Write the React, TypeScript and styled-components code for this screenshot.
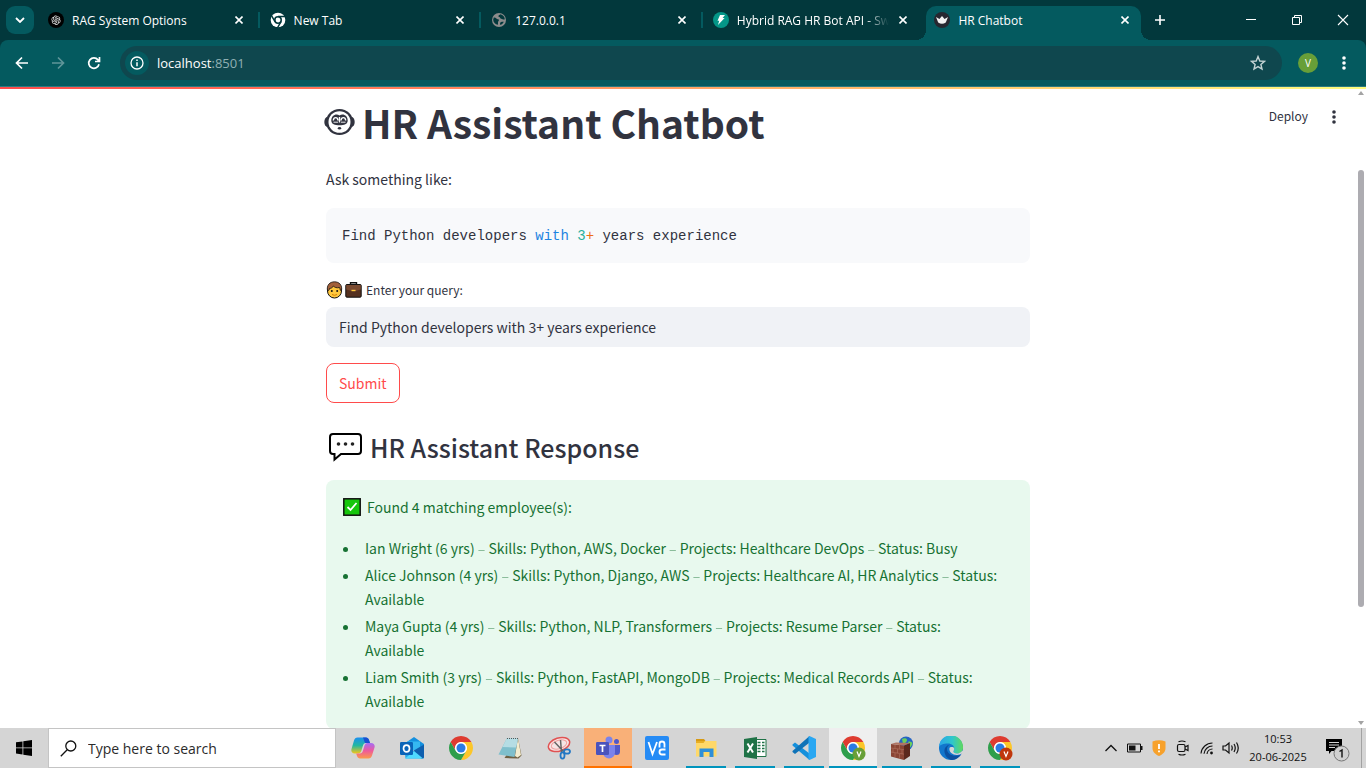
import React from "react";
import styled, { createGlobalStyle, css } from "styled-components";
import { AiOutlineOpenAI } from "react-icons/ai";

const chromeFont = `"Open Sans", "Noto Sans", sans-serif`;
const pageFont = `"Noto Sans CJK SC", "Noto Sans", sans-serif`;

const GlobalStyle = createGlobalStyle`
  *, *::before, *::after { box-sizing: border-box; }
  html, body { margin: 0; }
  body { font-family: ${pageFont}; color: #31333f; background: #fff; }
  button, input { font: inherit; color: inherit; margin: 0; }
  button { border: 0; padding: 0; background: none; cursor: pointer; }
  svg { display: block; flex: none; }
`;

/* ---------- shell ---------- */

const Desktop = styled.div`
  display: flex;
  flex-direction: column;
  height: 100vh;
  overflow: hidden;
`;

/* ---------- browser frame ---------- */

const BrowserFrame = styled.header`
  flex: none;
  font-family: ${chromeFont};
  color: #fff;
  background: #02383c;
`;

const TabStrip = styled.div`
  display: flex;
  align-items: flex-end;
  height: 40px;
  padding-left: 6px;
`;

const TabSearch = styled.button`
  display: grid;
  place-items: center;
  width: 28px;
  height: 28px;
  margin: 0 6px 6px 0;
  border-radius: 9px;
  background: #045a5f;
`;

const TabList = styled.nav`
  display: flex;
  flex: 0 1 1101px;
  min-width: 0;
`;

const Tab = styled.div<{ $active?: boolean }>`
  position: relative;
  display: flex;
  flex: 1 1 0;
  min-width: 0;
  align-items: center;
  gap: 8px;
  height: 34px;
  padding: 0 10px 6px 8px;
  border-radius: 10px 10px 0 0;
  ${(p) =>
    p.$active &&
    css`
      background: #045a5f;
      &::before,
      &::after {
        content: "";
        position: absolute;
        bottom: 0;
        width: 10px;
        height: 10px;
      }
      &::before {
        right: 100%;
        background: radial-gradient(circle at 0 0, transparent 10px, #045a5f 10px);
      }
      &::after {
        left: 100%;
        background: radial-gradient(circle at 100% 0, transparent 10px, #045a5f 10px);
      }
    `}
`;

const TabTitle = styled.a<{ $fade?: boolean }>`
  flex: 1;
  min-width: 0;
  padding-top: 2px;
  overflow: hidden;
  white-space: nowrap;
  font-size: 12px;
  line-height: 16px;
  color: #fff;
  text-decoration: none;
  ${(p) => p.$fade && "mask-image: linear-gradient(90deg, #000 84%, transparent);"}
`;

const TabDivider = styled.span<{ $hidden?: boolean }>`
  width: 2px;
  height: 16px;
  margin: 6px 2px 0 3px;
  background: ${(p) => (p.$hidden ? "transparent" : "#045a5f")};
`;

const IconButton = styled.button<{ $size?: number }>`
  display: grid;
  place-items: center;
  flex: none;
  width: ${(p) => p.$size ?? 28}px;
  height: ${(p) => p.$size ?? 28}px;
`;

const NewTab = styled(IconButton)`
  margin: 0 0 6px 5px;
`;

const WindowControls = styled.div`
  display: flex;
  align-self: stretch;
  margin-left: auto;
`;

const WindowButton = styled.button`
  display: grid;
  place-items: center;
  width: 46px;
`;

const Toolbar = styled.div`
  display: flex;
  align-items: center;
  gap: 8px;
  height: 47px;
  padding: 0 8px 1px;
  border-bottom: 1px solid #2b7a80;
  border-radius: 8px 8px 0 0;
  background: #045a5f;
`;

const Omnibox = styled.form`
  display: flex;
  flex: 1;
  align-items: center;
  height: 34px;
  margin: 0 4px;
  padding: 0 10px 0 5px;
  border-radius: 17px;
  background: #0f474e;
`;

const SiteInfo = styled.button`
  display: grid;
  place-items: center;
  width: 24px;
  height: 24px;
  border-radius: 50%;
  background: #045a5f;
`;

const Address = styled.span`
  flex: 1;
  padding-left: 8px;
  font-size: 13px;
  line-height: 20px;
  span { color: #8fb0b3; }
`;

const Avatar = styled.button`
  width: 20px;
  height: 20px;
  margin: 0 4px;
  border-radius: 50%;
  background: #689f38;
  font-size: 10px;
  line-height: 20px;
  text-align: center;
`;

/* ---------- page ---------- */

const Viewport = styled.div`
  display: flex;
  flex: 1;
  min-height: 0;
  position: relative;
  background: #fff;
`;

const Decoration = styled.div`
  flex: none;
  height: 2px;
  background: linear-gradient(90deg, #ff4b4b, #fffd80);
`;

const Main = styled.main`
  flex: 1;
  min-width: 0;
  overflow: hidden;
`;

const AppActions = styled.div`
  position: absolute;
  top: 14px;
  right: 18px;
  display: flex;
  align-items: center;
  gap: 12px;
`;

const Deploy = styled.button`
  padding-bottom: 2px;
  font-size: 12px;
  line-height: 20px;
`;

const Scrollbar = styled.div`
  display: flex;
  flex-direction: column;
  align-items: center;
  justify-content: space-between;
  flex: none;
  width: 10px;
  padding: 2px 0 3px;
`;

const ScrollTrack = styled.div`
  flex: 1;
  width: 6px;
  padding: 75px 0 114px;
`;

const ScrollThumb = styled.div`
  height: 100%;
  border-radius: 3px;
  background: #adacb1;
`;

const Block = styled.div`
  width: 100%;
  max-width: 704px;
  margin: 0 auto;
  padding-top: 6px;
`;

const Title = styled.h1`
  display: flex;
  align-items: center;
  gap: 7px;
  margin: 0 0 18px -2px;
  font-size: 39px;
  font-weight: 700;
  line-height: 54px;
`;

const Paragraph = styled.p`
  margin: 0 0 17px;
  font-size: 14px;
  line-height: 24px;
`;

const CodeBlock = styled.pre`
  margin: 0 0 16px;
  padding: 17px 16px 15px;
  border-radius: 8px;
  background: #f8f9fb;
  font-family: "Liberation Mono", monospace;
  font-size: 14px;
  line-height: 23px;
`;

const Token = styled.span<{ $color: string }>`
  color: ${(p) => p.$color};
`;

const QueryLabel = styled.label`
  display: flex;
  align-items: center;
  gap: 2px;
  margin-bottom: 6px;
  font-size: 12px;
  line-height: 22px;
  span { margin-left: 2px; }
`;

const QueryInput = styled.input`
  display: block;
  width: 100%;
  height: 40px;
  padding: 0 13px 1px;
  border: 0;
  border-radius: 8px;
  outline: 0;
  background: #f0f2f6;
  font-size: 14px;
`;

const SubmitButton = styled.button`
  height: 40px;
  margin: 16px 0;
  padding: 0 12px 1px;
  border: 1px solid #ff4b4b;
  border-radius: 8px;
  font-size: 14px;
  line-height: 24px;
  color: #ff4b4b;
`;

const Subtitle = styled.h3`
  display: flex;
  align-items: center;
  gap: 8px;
  margin: 8px 0 13px 3px;
  font-size: 25px;
  font-weight: 500;
  line-height: 40px;
`;

const SuccessAlert = styled.section`
  padding: 15px 16px 16px;
  border-radius: 8px;
  background: #e8f9ee;
  color: #177233;
  font-size: 14px;
  line-height: 24px;
`;

const AlertHeading = styled.p`
  display: flex;
  align-items: center;
  gap: 6px;
  margin: 0 0 17px 1px;
`;

const Employees = styled.ul`
  display: grid;
  gap: 3px;
  margin: 0;
  padding: 0 16px 0 18px;
  li { padding-left: 5px; }
`;

const Dash = styled.span`
  opacity: 0.5;
`;

/* ---------- taskbar ---------- */

const Taskbar = styled.footer`
  display: flex;
  flex: none;
  height: 40px;
  background: #d5d5d5;
  color: #111;
  font-family: ${chromeFont};
`;

const StartButton = styled.button`
  display: grid;
  place-items: center;
  width: 48px;
`;

const SearchBox = styled.label`
  display: flex;
  align-items: center;
  gap: 11px;
  flex: 0 1 288px;
  margin-right: 3px;
  padding-left: 11px;
  border: 1px solid #c4c4c4;
  background: #fff;
  input {
    flex: 1;
    min-width: 0;
    border: 0;
    padding: 0;
    outline: 0;
    background: none;
    font-size: 14px;
  }
  input::placeholder { color: #2b2b2b; opacity: 1; }
`;

const AppList = styled.div`
  display: flex;
  gap: 1px;
`;

type AppState = "idle" | "open" | "active" | "alert";

const AppButton = styled.button<{ $state: AppState }>`
  position: relative;
  display: grid;
  place-items: center;
  width: 48px;
  background: ${(p) =>
    p.$state === "active" ? "#efefef" : p.$state === "alert" ? "#f9b078" : "transparent"};
  &::after {
    content: "";
    position: absolute;
    bottom: 0;
    left: ${(p) => (p.$state === "open" ? 4 : 0)}px;
    right: ${(p) => (p.$state === "open" ? 4 : 0)}px;
    height: ${(p) => (p.$state === "idle" ? 0 : 2)}px;
    background: ${(p) => (p.$state === "alert" ? "#ff7200" : "#0094bd")};
  }
`;

const Tray = styled.div`
  display: flex;
  align-items: center;
  margin-left: auto;
`;

const Clock = styled.time`
  width: 66px;
  margin: 0 8px 0 2px;
  font-size: 11px;
  line-height: 18px;
  text-align: center;
`;

const Notifications = styled.button`
  display: grid;
  place-items: center;
  width: 38px;
  height: 40px;
  margin-right: 4px;
  padding-top: 4px;
`;

const ShowDesktop = styled.button`
  align-self: stretch;
  width: 5px;
  border-left: 1px solid #a2a2a2;
`;

/* ---------- icons ---------- */

const CloseIcon = () => (
  <svg width="8" height="8" viewBox="0 0 8 8" stroke="#fff" strokeWidth="1.6">
    <path d="M.5.5l7 7M7.5.5l-7 7" />
  </svg>
);

const Dots = ({ color }: { color: string }) => (
  <svg width="4" height="14" viewBox="0 0 4 14" fill={color}>
    <circle cx="2" cy="2" r="1.8" />
    <circle cx="2" cy="7" r="1.8" />
    <circle cx="2" cy="12" r="1.8" />
  </svg>
);

const GptIcon = () => (
  <svg width="16" height="16" viewBox="0 0 16 16">
    <circle cx="8" cy="8" r="8" fill="#000" />
    <AiOutlineOpenAI x="2" y="2" size={12} color="#ddd" />
  </svg>
);

const ChromeMonoIcon = () => (
  <svg width="16" height="16" viewBox="0 0 24 24">
    <circle cx="12" cy="12" r="11" fill="#fff" />
    <circle cx="12" cy="12" r="4.8" fill="#fff" stroke="#02383c" strokeWidth="2.4" />
    <path d="M12 6.8h11M7.5 14.6L2 5M16.5 14.6L11 24" stroke="#02383c" strokeWidth="2.2" />
  </svg>
);

const GlobeIcon = () => (
  <svg width="16" height="16" viewBox="0 0 16 16">
    <circle cx="8" cy="8" r="7" fill="#8c8c8c" />
    <path
      d="M2.8 5.5c1-.2 2 .2 2.600 1 .7.9 2 .4 2.400 1.200.5 1-.8 1.500-.8 2.500v2.600C4.200 12.400 2.200 10 2.200 7.700zM9.500 2.200C8.800 3 7.400 3 7.400 4.200c0 1 1.500.6 1.700 1.500.3 1.200 1.800.8 2.500 1.500.6.6 1.800.4 2.200.1-.1-2.500-2-4.600-4.300-5.100zM9 11c.6-1 2-1.400 3.800-1.200-.6 1.500-1.900 2.700-3.500 3.100z"
      fill="#02383c"
    />
  </svg>
);

const FastApiIcon = () => (
  <svg width="16" height="16" viewBox="0 0 16 16">
    <circle cx="8" cy="8" r="8" fill="#049688" />
    <path d="M7 3h5L9.600 6h2L5 13l1.200-4.200H4.500z" fill="#fff" />
  </svg>
);

const CrownIcon = () => (
  <svg width="16" height="16" viewBox="0 0 16 16">
    <circle cx="8" cy="8" r="8" fill="#262730" />
    <path d="M2 5l3.400 1.900L8 4l2.600 2.900L14 5l-2.200 5.500a7 7 0 01-7.600 0z" fill="#f2f2f2" />
  </svg>
);

const RobotFace = () => (
  <svg width="31" height="28" viewBox="0 0 31 28">
    <g fill="#31333f">
      <ellipse cx="3.500" cy="14" rx="3.200" ry="5" />
      <ellipse cx="27.500" cy="14" rx="3.200" ry="5" />
      <ellipse cx="15.500" cy="14" rx="13.500" ry="13" />
    </g>
    <ellipse cx="15.500" cy="14" rx="11" ry="10.800" fill="#fff" />
    <path d="M15.500 7.500C12 5 7.300 7.500 7.300 12.500c0 3.800 3.500 4.700 8.200 4.700s8.200-.9 8.200-4.700c0-5-4.700-7.500-8.200-5z" fill="#31333f" />
    <path d="M15.500 9v5.500M9.300 12.500c.4-3.800 4.400-3.800 4.700 0M17 12.500c.4-3.800 4.400-3.800 4.700 0" fill="none" stroke="#fff" strokeWidth="1.400" />
    <path d="M9.500 14.200h4.500M17 14.200h4.500" stroke="#fff" strokeWidth=".9" />
    <ellipse cx="15.500" cy="20.300" rx="1.700" ry="1.300" fill="#31333f" />
  </svg>
);

const PersonEmoji = () => (
  <svg width="17" height="18" viewBox="0 0 17 18">
    <circle cx="8.500" cy="10" r="7" fill="#ffc83d" stroke="#111" />
    <path d="M1.600 10C.2 4 4 .8 8.500.8S16.800 4 15.400 10C14 9.500 14 7.500 13.500 6.500c-3 .8-5-.2-6-1.500-.8 1.500-2.500 2.500-4 2.500 0 1-.6 2-1.900 2.500z" fill="#a2603a" stroke="#111" strokeWidth=".8" />
    <circle cx="5.800" cy="10" r="1" fill="#111" />
    <circle cx="11.200" cy="10" r="1" fill="#111" />
    <path d="M6 13.500q2.500 1.600 5 0" stroke="#d67d00" fill="none" />
  </svg>
);

const BriefcaseEmoji = () => (
  <svg width="17" height="18" viewBox="0 0 17 18">
    <path d="M5.500 4V1.800h6V4" fill="none" stroke="#111" strokeWidth="1.400" />
    <rect x=".8" y="3.500" width="15.400" height="12.700" rx="1" fill="#54301f" stroke="#111" />
    <path d="M1.300 4h14.400v4.500L10.500 10h-4L1.300 8.500z" fill="#7a4a30" />
    <path d="M6.500 9.500h4" stroke="#ffc83d" strokeWidth="1.400" />
  </svg>
);

const SpeechIcon = () => (
  <svg width="33" height="32" viewBox="0 0 33 32">
    <path d="M4 3h25a3 3 0 013 3v14a3 3 0 01-3 3H12l-6.500 5.500V23H4a3 3 0 01-3-3V6a3 3 0 013-3z" fill="#fff" stroke="#000" strokeWidth="2" />
    <g fill="#222">
      <circle cx="9.500" cy="13" r="1.800" />
      <circle cx="16.500" cy="13" r="1.800" />
      <circle cx="23.500" cy="13" r="1.800" />
    </g>
  </svg>
);

const CheckEmoji = () => (
  <svg width="18" height="18" viewBox="0 0 18 18">
    <rect x=".8" y=".8" width="16.400" height="16.400" fill="#16c60c" stroke="#111" strokeWidth="1.500" />
    <path d="M4.500 9l3 3 6-7" fill="none" stroke="#fff" strokeWidth="1.800" />
  </svg>
);

const CopilotIcon = () => (
  <svg width="24" height="24" viewBox="0 0 24 24">
    <defs>
      <linearGradient id="copilotA" x1="0" y1="0" x2="0" y2="1">
        <stop offset="0" stopColor="#1a8ff0" />
        <stop offset=".5" stopColor="#22b8a0" />
        <stop offset="1" stopColor="#f5c518" />
      </linearGradient>
      <linearGradient id="copilotB" x1="0" y1="0" x2="0" y2="1">
        <stop offset="0" stopColor="#a46cf5" />
        <stop offset=".5" stopColor="#ee5a9c" />
        <stop offset="1" stopColor="#fb9a4a" />
      </linearGradient>
    </defs>
    <path d="M6.500 1.500h8.500c1.500 0 2.500 1 3 2.500l1 3h-4c-1.800 0-2.600 1-3.200 3l-1.500 5c-.5 1.600-1.500 2.500-3 2.500H4c-3 0-4.200-2-3.500-4.500L3 4.500c.6-2 1.700-3 3.500-3z" fill="url(#copilotA)" />
    <path d="M17.500 22.500H9c-1.500 0-2.500-1-3-2.500l-.8-2.500h3.500c1.800 0 2.800-1 3.300-3l1.500-5c.5-1.600 1.500-2.500 3-2.500H20c3 0 4.200 2 3.500 4.500L21 19.500c-.6 2-1.700 3-3.500 3z" fill="url(#copilotB)" />
    <path d="M12 1.500h3c1.500 0 2.500 1 3 2.500l1 3h-5z" fill="#1b4fd0" />
  </svg>
);

const OutlookIcon = () => (
  <svg width="24" height="24" viewBox="0 0 24 24">
    <path d="M4 8l10-7 10 7v3H4z" fill="#1490df" />
    <path d="M7 5.500h13V14H7z" fill="#35b8f1" />
    <path d="M24 8.500V21a1.500 1.500 0 01-1.500 1.500H5.500L4 10l10 5z" fill="#28a8ea" />
    <path d="M24 8.500L13 15l8 7.500h1.500A1.500 1.500 0 0024 21z" fill="#0f5fae" />
    <path d="M5 22.500L14 15l9 7.500z" fill="#50d9ff" />
    <rect y="6" width="13" height="13" rx="1.200" fill="#0a64b8" />
    <ellipse cx="6.500" cy="12.500" rx="3" ry="3.400" fill="none" stroke="#fff" strokeWidth="1.700" />
  </svg>
);

const chromeArc = "M12 6h10.390A12 12 0 0 0 1.610 6L6.800 15A6 6 0 0 1 12 6z";

const ChromeIcon = ({ badge }: { badge?: string }) => (
  <svg width="26" height="26" viewBox="0 0 26 26">
    <g transform="translate(1 1)">
      <circle cx="12" cy="12" r="7" fill="#fff" />
      <path d={chromeArc} fill="#de3b30" />
      <path d={chromeArc} fill="#fcc629" transform="rotate(120 12 12)" />
      <path d={chromeArc} fill="#2e9e4b" transform="rotate(240 12 12)" />
      <circle cx="12" cy="12" r="5.700" fill="#fff" />
      <circle cx="12" cy="12" r="4.500" fill="#2a7be4" />
    </g>
    {badge && (
      <>
        <circle cx="19" cy="19" r="6.500" fill={badge} />
        <path d="M17 16.500l2 5 2-5" fill="none" stroke="#fff" strokeWidth="1.200" />
      </>
    )}
  </svg>
);

const NotepadIcon = () => (
  <svg width="24" height="24" viewBox="0 0 24 24">
    <path d="M20 2l3.500 17.500-3 3-14-.5z" fill="#6f6042" />
    <path d="M20 2l3 17-3.500 2.500L17 20z" fill="#f3eccf" />
    <path d="M9 2h11l-3.500 19L.5 18.500z" fill="#7fbfcc" />
    <path d="M9 2h11l-1.800 9.500L4.500 11z" fill="#b5dde4" />
    <path d="M9 2.500h11" stroke="#555" strokeDasharray="1 1" />
  </svg>
);

const SnipIcon = () => (
  <svg width="24" height="24" viewBox="0 0 24 24" fill="none">
    <ellipse cx="12" cy="8.500" rx="11" ry="6.500" transform="rotate(-18 12 8.500)" fill="#f6e4e4" stroke="#e05252" strokeWidth="1.500" />
    <ellipse cx="12" cy="8.500" rx="8" ry="4.200" transform="rotate(-18 12 8.500)" stroke="#f0a0a0" />
    <path d="M7.500 6l9 9.500M13.500 4l1 12" stroke="#666" strokeWidth="1.500" />
    <ellipse cx="20" cy="15.500" rx="3" ry="2.200" stroke="#2277c4" strokeWidth="1.800" />
    <ellipse cx="15.500" cy="19.500" rx="2" ry="3.200" stroke="#2277c4" strokeWidth="1.800" />
  </svg>
);

const TeamsIcon = () => (
  <svg width="24" height="24" viewBox="0 0 24 24">
    <circle cx="20.500" cy="5.500" r="2.500" fill="#5059c9" />
    <path d="M17 9h7v6.500a3.500 3.500 0 01-7 0z" fill="#5059c9" />
    <circle cx="13" cy="4" r="3.500" fill="#7b83eb" />
    <path d="M7 9h12v7.500a6 6 0 01-12 0z" fill="#7b83eb" />
    <rect y="6" width="13" height="13" rx="1.200" fill="#4b53bc" />
    <path d="M3.500 9.500h6M6.500 9.500v6.500" stroke="#fff" strokeWidth="1.700" />
  </svg>
);

const VncIcon = () => (
  <svg width="24" height="24" viewBox="0 0 24 24">
    <rect width="24" height="24" rx="2" fill="#258bf5" />
    <g fill="none" stroke="#fff" strokeWidth="1.800">
      <path d="M3.500 6l4 12L12 6M14.500 11.500V8a2.500 2.500 0 015 0v3.500M20.500 13.500H17a2.500 2.500 0 000 5h3.500" />
    </g>
  </svg>
);

const ExplorerIcon = () => (
  <svg width="24" height="24" viewBox="0 0 24 24">
    <path d="M2 3h8l1.500 2H2z" fill="#d79a13" />
    <path d="M2 5h20.500v15.500H2z" fill="#ffd869" />
    <path d="M2 5h9l-1.500 2H2z" fill="#e8ae24" />
    <path d="M5.500 21v-8.500h14V21h-4v-5h-6v5z" fill="#2f8fd8" />
  </svg>
);

const ExcelIcon = () => (
  <svg width="24" height="24" viewBox="0 0 24 24">
    <path d="M12 3.500h11v17H12z" fill="#fff" stroke="#1f7246" />
    <path d="M14.500 6.500h3M14.500 9.500h3M14.500 12.500h3M14.500 15.500h3M19 6.500h2.500M19 9.500h2.500M19 12.500h2.500M19 15.500h2.500" stroke="#1f7246" strokeWidth="1.600" />
    <path d="M1 3l13-2v22L1 21z" fill="#1f7246" />
    <path d="M4.500 7.500l5.500 9M10 7.500l-5.500 9" stroke="#fff" strokeWidth="2" />
  </svg>
);

const CodeIcon = () => (
  <svg width="24" height="24" viewBox="0 0 24 24">
    <path d="M17.500 17.500V24L.5 9.500v-1L3 6.500z" fill="#1590dc" />
    <path d="M17.500 0v6.500L3 18 .5 16v-1z" fill="#0f73b8" />
    <path d="M17.500 0L24 3v18l-6.500 3-1-.8V.8z" fill="#2aa7f2" />
  </svg>
);

const FirewallIcon = () => (
  <svg width="24" height="24" viewBox="0 0 24 24">
    <circle cx="16" cy="7.500" r="7" fill="#2464c4" />
    <path d="M12 3c2-1.500 5-1 5 1s-2 3-4 4zM18 6c2-1 4 0 4.500 1.500l-2 4z" fill="#6dce5b" />
    <path d="M1 8l13 1.500V24L1 20.500z" fill="#8a4434" />
    <path d="M14 9.500L20 7v13l-6 4z" fill="#5c281d" />
    <path d="M1 12l13 1.700M1 16l13 2.200M5 8.500v4M9.500 9v4M3 12.500v4M7.500 13v4M12 14v4M5 17v4M9.500 18v4.500" stroke="#b87c6a" strokeWidth=".5" />
    <path d="M1 8l5-1.500 14 .5-6 2.500z" fill="#b07464" />
  </svg>
);

const EdgeIcon = () => (
  <svg width="24" height="24" viewBox="0 0 24 24">
    <defs>
      <linearGradient id="edgeTop">
        <stop offset="0" stopColor="#2ba5e8" />
        <stop offset=".55" stopColor="#2fc6cc" />
        <stop offset="1" stopColor="#62d95c" />
      </linearGradient>
    </defs>
    <circle cx="12" cy="12" r="12" fill="#1276cc" />
    <path d="M0 11A12 12 0 0124 11.500c0 4-3 6-6 6-2.500 0-4-1-3.500-2.200.5-1 .8-1.500.8-2.800 0-2.500-2.500-5-6.500-5C4.500 7.500.8 9 0 11z" fill="url(#edgeTop)" />
    <path d="M8 13c0-2 1-3.500 3-4.500-4 1-6 4-5.500 7.500.5 4 3.500 7.500 7.500 8 4-.3 7-2.500 9-5.500-6 3-14 .5-14-5.500z" fill="#0c50a0" />
    <path d="M10.500 12c-.8 4 3 7 7.500 7 2 0 4-.8 5-1.500l1-.5v-2.500l-1.500 1c-1.500 1.500-3 2-4.500 2-2.500 0-4-1-3.500-2.200.5-1 .8-1.500.7-3-.2-1.500-4-2-4.700-.3z" fill="#d5d5d5" />
  </svg>
);

/* ---------- data ---------- */

const tabs = [
  { title: "RAG System Options", icon: <GptIcon /> },
  { title: "New Tab", icon: <ChromeMonoIcon /> },
  { title: "127.0.0.1", icon: <GlobeIcon /> },
  { title: "Hybrid RAG HR Bot API - Sw", icon: <FastApiIcon />, fade: true },
  { title: "HR Chatbot", icon: <CrownIcon />, active: true },
];

const employees = [
  { name: "Ian Wright", years: 6, skills: "Python, AWS, Docker", projects: "Healthcare DevOps", status: "Busy" },
  { name: "Alice Johnson", years: 4, skills: "Python, Django, AWS", projects: "Healthcare AI, HR Analytics", status: "Available" },
  { name: "Maya Gupta", years: 4, skills: "Python, NLP, Transformers", projects: "Resume Parser", status: "Available" },
  { name: "Liam Smith", years: 3, skills: "Python, FastAPI, MongoDB", projects: "Medical Records API", status: "Available" },
];

const apps: { name: string; icon: React.ReactNode; state: AppState }[] = [
  { name: "Copilot", icon: <CopilotIcon />, state: "idle" },
  { name: "Outlook", icon: <OutlookIcon />, state: "idle" },
  { name: "Chrome", icon: <ChromeIcon />, state: "idle" },
  { name: "Notepad", icon: <NotepadIcon />, state: "idle" },
  { name: "Snipping Tool", icon: <SnipIcon />, state: "idle" },
  { name: "Teams", icon: <TeamsIcon />, state: "alert" },
  { name: "VNC Viewer", icon: <VncIcon />, state: "idle" },
  { name: "File Explorer", icon: <ExplorerIcon />, state: "open" },
  { name: "Excel", icon: <ExcelIcon />, state: "open" },
  { name: "Visual Studio Code", icon: <CodeIcon />, state: "open" },
  { name: "Chrome, work profile", icon: <ChromeIcon badge="#689f38" />, state: "active" },
  { name: "Firewall", icon: <FirewallIcon />, state: "open" },
  { name: "Edge", icon: <EdgeIcon />, state: "open" },
  { name: "Chrome, second profile", icon: <ChromeIcon badge="#bf360c" />, state: "open" },
];

/* ---------- sections ---------- */

const Browser = () => (
  <BrowserFrame>
    <TabStrip>
      <TabSearch aria-label="Search tabs">
        <svg width="10" height="6" viewBox="0 0 10 6" fill="none" stroke="#fff" strokeWidth="1.800">
          <path d="M1 1l4 4 4-4" />
        </svg>
      </TabSearch>
      <TabList>
        {tabs.map((tab, i) => (
          <React.Fragment key={tab.title}>
            {i > 0 && <TabDivider $hidden={tab.active} />}
            <Tab $active={tab.active}>
              {tab.icon}
              <TabTitle href="#" $fade={tab.fade}>{tab.title}</TabTitle>
              <IconButton $size={12} aria-label={`Close ${tab.title}`}><CloseIcon /></IconButton>
            </Tab>
          </React.Fragment>
        ))}
      </TabList>
      <NewTab aria-label="New tab">
        <svg width="12" height="12" viewBox="0 0 12 12" stroke="#fff" strokeWidth="1.600">
          <path d="M6 1v10M1 6h10" />
        </svg>
      </NewTab>
      <WindowControls>
        <WindowButton aria-label="Minimize">
          <svg width="10" height="10" viewBox="0 0 10 10" stroke="#fff"><path d="M0 4.500h10" /></svg>
        </WindowButton>
        <WindowButton aria-label="Restore">
          <svg width="10" height="10" viewBox="0 0 10 10" fill="none" stroke="#fff">
            <path d="M.5 2.500h7v7h-7zM2.500 2.500v-2h7v7h-2" />
          </svg>
        </WindowButton>
        <WindowButton aria-label="Close window">
          <svg width="12" height="12" viewBox="0 0 12 12" stroke="#fff" strokeWidth="1.100"><path d="M1 1l10 10M11 1L1 11" /></svg>
        </WindowButton>
      </WindowControls>
    </TabStrip>
    <Toolbar>
      <IconButton aria-label="Back">
        <svg width="14" height="14" viewBox="0 0 14 14" fill="none" stroke="#fff" strokeWidth="1.700"><path d="M13 7H2M7 1.500L1.500 7 7 12.500" /></svg>
      </IconButton>
      <IconButton aria-label="Forward">
        <svg width="14" height="14" viewBox="0 0 14 14" fill="none" stroke="#5f9599" strokeWidth="1.700"><path d="M1 7h11M7 1.500L12.500 7 7 12.500" /></svg>
      </IconButton>
      <IconButton aria-label="Reload">
        <svg width="14" height="14" viewBox="0 0 14 14" fill="none" stroke="#fff" strokeWidth="1.700">
          <path d="M12 8.300A5.200 5.200 0 1111 3.900L12.300 5.200M12.500 1v4.500H8" />
        </svg>
      </IconButton>
      <Omnibox>
        <SiteInfo type="button" aria-label="Site information">
          <svg width="14" height="14" viewBox="0 0 14 14" fill="none" stroke="#fff" strokeWidth="1.300">
            <circle cx="7" cy="7" r="6" />
            <path d="M7 6.200v4M7 3.500v1.400" strokeWidth="1.500" />
          </svg>
        </SiteInfo>
        <Address>localhost<span>:8501</span></Address>
        <IconButton type="button" aria-label="Bookmark this tab">
          <svg width="16" height="16" viewBox="0 0 16 16" fill="none" stroke="#c4d3d4" strokeWidth="1.400">
            <path d="M8 1.600l1.800 4.400 4.700.4-3.600 3.100 1.100 4.600L8 11.600l-4 2.500 1.100-4.600L1.500 6.400l4.700-.4z" />
          </svg>
        </IconButton>
      </Omnibox>
      <Avatar aria-label="Profile">V</Avatar>
      <IconButton aria-label="Menu"><Dots color="#fff" /></IconButton>
    </Toolbar>
  </BrowserFrame>
);

const Page = () => (
  <>
    <Decoration />
    <Viewport>
      <Main>
        <Block>
          <Title><RobotFace />HR Assistant Chatbot</Title>
          <Paragraph>Ask something like:</Paragraph>
          <CodeBlock>
            Find Python developers <Token $color="#1c83e1">with</Token> <Token $color="#29b09d">3</Token>
            <Token $color="#ed6f13">+</Token> years experience
          </CodeBlock>
          <form onSubmit={(e) => e.preventDefault()}>
            <QueryLabel htmlFor="query"><PersonEmoji /><BriefcaseEmoji /><span>Enter your query:</span></QueryLabel>
            <QueryInput id="query" defaultValue="Find Python developers with 3+ years experience" />
            <SubmitButton type="submit">Submit</SubmitButton>
          </form>
          <Subtitle><SpeechIcon />HR Assistant Response</Subtitle>
          <SuccessAlert>
            <AlertHeading><CheckEmoji />Found 4 matching employee(s):</AlertHeading>
            <Employees>
              {employees.map((e) => (
                <li key={e.name}>
                  {`${e.name} (${e.years} yrs)`}
                  <Dash> – </Dash>
                  {`Skills: ${e.skills}`}
                  <Dash> – </Dash>
                  {`Projects: ${e.projects}`}
                  <Dash> – </Dash>
                  <span>Status: </span>
                  <span>{e.status}</span>
                </li>
              ))}
            </Employees>
          </SuccessAlert>
        </Block>
      </Main>
      <AppActions>
        <Deploy>Deploy</Deploy>
        <IconButton aria-label="App menu"><Dots color="#31333f" /></IconButton>
      </AppActions>
      <Scrollbar aria-hidden="true">
        <svg width="6" height="4" viewBox="0 0 6 4" fill="#a3a3a3"><path d="M0 4l3-4 3 4z" /></svg>
        <ScrollTrack><ScrollThumb /></ScrollTrack>
        <svg width="6" height="4" viewBox="0 0 6 4" fill="#a3a3a3"><path d="M0 0l3 4 3-4z" /></svg>
      </Scrollbar>
    </Viewport>
  </>
);

const SystemTray = () => (
  <Tray>
    <IconButton $size={24} aria-label="Show hidden icons">
      <svg width="12" height="8" viewBox="0 0 12 8" fill="none" stroke="#111" strokeWidth="1.300"><path d="M.5 7L6 1.500 11.500 7" /></svg>
    </IconButton>
    <IconButton $size={24} aria-label="Battery">
      <svg width="16" height="10" viewBox="0 0 16 10"><path d="M.5 1h13v8H.5z" fill="none" stroke="#111" /><path d="M2 2.500h6.500v5H2zM14 3h1.500v4H14z" fill="#111" /></svg>
    </IconButton>
    <IconButton $size={24} aria-label="Security">
      <svg width="14" height="16" viewBox="0 0 14 16"><path d="M.5 1.500Q7-.8 13.500 1.500V8c0 4-3 6.500-6.500 8C3.500 14.500.5 12 .5 8z" fill="#f7a12b" /><path d="M7 4v5M7 10.500v1.700" stroke="#fff" strokeWidth="1.800" /></svg>
    </IconButton>
    <IconButton $size={24} aria-label="Camera">
      <svg width="14" height="16" viewBox="0 0 14 16" fill="none" stroke="#111" strokeWidth="1.200"><rect x="1.500" y="4.500" width="7.500" height="7" rx="1.500" /><path d="M9 7l3-1.500v5L9 9M2.500 1.800q3.500-1.600 7 0M2.500 14.200q3.500 1.600 7 0" /></svg>
    </IconButton>
    <IconButton $size={24} aria-label="Network">
      <svg width="14" height="14" viewBox="0 0 14 14" fill="none" stroke="#111" strokeWidth="1.100"><path d="M1 12.500A11.500 11.500 0 0112.500 2M4 12.800A8.500 8.500 0 0112.500 5M7 13A5.500 5.500 0 0112.500 8" /><circle cx="11.500" cy="12" r="1.400" fill="#111" stroke="none" /></svg>
    </IconButton>
    <IconButton $size={24} aria-label="Volume">
      <svg width="18" height="14" viewBox="0 0 18 14" fill="none" stroke="#111" strokeWidth="1.200"><path d="M1 5h2.500L7 2v10L3.500 9H1zM9.500 4.500q1.500 2.500 0 5M12 3q2.500 4 0 8M14.500 1.500q3.500 5.500 0 11" /></svg>
    </IconButton>
    <Clock>10:53<br />20-06-2025</Clock>
    <Notifications aria-label="1 notification">
      <svg width="26" height="26" viewBox="0 0 26 26">
        <path d="M1 2h16v12H6.500L4 17v-3H1z" fill="#000" />
        <path d="M4 5.500h10M4 8h10M4 10.500h6" stroke="#d5d5d5" />
        <circle cx="16.500" cy="16.500" r="7.500" fill="#d0d0d0" stroke="#777" />
        <path d="M14.500 14.500l2.500-1.500v7.500" fill="none" stroke="#111" strokeWidth="1.400" />
      </svg>
    </Notifications>
    <ShowDesktop aria-label="Show desktop" />
  </Tray>
);

export default function App() {
  return (
    <Desktop>
      <GlobalStyle />
      <Browser />
      <Page />
      <Taskbar>
        <StartButton aria-label="Start">
          <svg width="16" height="16" viewBox="0 0 16 16"><path d="M0 2.300L6.500 1.400v6.100H0zM7.300 1.300L16 0v7.500H7.300zM0 8.300h6.500v6.200L0 13.600zM7.300 8.300H16V16l-8.700-1.300z" fill="#000" /></svg>
        </StartButton>
        <SearchBox>
          <svg width="17" height="17" viewBox="0 0 17 17" fill="none" stroke="#111" strokeWidth="1.300"><circle cx="10.800" cy="6" r="5" /><path d="M7.200 9.700L.8 16.200" /></svg>
          <input type="text" aria-label="Search" placeholder="Type here to search" />
        </SearchBox>
        <AppList>
          {apps.map((app) => (
            <AppButton key={app.name} $state={app.state} aria-label={app.name}>{app.icon}</AppButton>
          ))}
        </AppList>
        <SystemTray />
      </Taskbar>
    </Desktop>
  );
}
